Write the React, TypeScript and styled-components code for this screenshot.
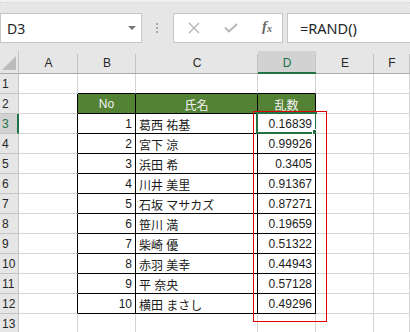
import styled, { createGlobalStyle } from "styled-components";

const GlobalStyle = createGlobalStyle`
  html, body {
    margin: 0;
    padding: 0;
    background: #e6e6e6;
  }
`;

const UI_FONT = `"Noto Sans", "Liberation Sans", sans-serif`;
const CELL_FONT = `"Liberation Sans", "Noto Sans CJK JP", sans-serif`;
const EXCEL_GREEN = "#217346";
const GRID = "#d4d4d4";

const COLS = ["A", "B", "C", "D", "E", "F"];
const COL_WIDTHS = "19px 59px 58px 122px 58px 58px 1fr";

interface Person {
  no: number;
  name: string;
  rand: string;
}

const people: Person[] = [
  { no: 1, name: "葛西 祐基", rand: "0.16839" },
  { no: 2, name: "宮下 涼", rand: "0.99926" },
  { no: 3, name: "浜田 希", rand: "0.3405" },
  { no: 4, name: "川井 美里", rand: "0.91367" },
  { no: 5, name: "石坂 マサカズ", rand: "0.87271" },
  { no: 6, name: "笹川 満", rand: "0.19659" },
  { no: 7, name: "柴崎 優", rand: "0.51322" },
  { no: 8, name: "赤羽 美幸", rand: "0.44943" },
  { no: 9, name: "平 奈央", rand: "0.57128" },
  { no: 10, name: "横田 まさし", rand: "0.49296" },
];

export default function App() {
  // 表の範囲は B2:D12 (列 1..3, 行 2..12)
  const inTable = (col: number, row: number) => col >= 1 && col <= 3 && row >= 2 && row <= 12;

  const cellText = (col: number, row: number) => {
    if (row === 2) return ["No", "氏名", "乱数"][col - 1];
    const p = people[row - 3];
    if (!p) return "";
    if (col === 1) return String(p.no);
    if (col === 2) return p.name;
    return p.rand;
  };

  const rows = Array.from({ length: 13 }, (_, i) => i + 1);

  return (
    <Page>
      <GlobalStyle />
      <TopStrip />
      <FormulaBar>
        <NameBox>
          <span>D3</span>
          <DropArrow />
        </NameBox>
        <Splitter>
          <Dot />
          <Dot />
          <Dot />
        </Splitter>
        <FxBox>
          <svg width="12" height="12" viewBox="0 0 12 12">
            <path d="M1 1 L11 11 M11 1 L1 11" stroke="#b4b4b4" strokeWidth="1.4" fill="none" />
          </svg>
          <svg width="14" height="10" viewBox="0 0 14 10">
            <path d="M1 4.5 L5 8.5 L13 1" stroke="#b4b4b4" strokeWidth="1.8" fill="none" />
          </svg>
          <FxLabel>
            f<sub>x</sub>
          </FxLabel>
        </FxBox>
        <FormulaInput>=RAND()</FormulaInput>
      </FormulaBar>

      <Sheet>
        <Corner>
          <svg width="14" height="14" viewBox="0 0 14 14">
            <polygon points="0,14 14,0 14,14" fill="#bcbcbc" />
          </svg>
        </Corner>
        {COLS.map((c) => (
          <ColHeader key={c} active={c === "D"}>
            {c}
          </ColHeader>
        ))}

        {rows.map((row) => (
          <Row key={row}>
            <RowHeader active={row === 3}>{row}</RowHeader>
            {COLS.map((c, i) => {
              const col = i;
              const table = inTable(col, row);
              const head = row === 2 && table;
              const rightBlack = table || (col === 0 && row >= 2 && row <= 12);
              const bottomBlack = col >= 1 && col <= 3 && row >= 1 && row <= 12;
              return (
                <Cell
                  key={c}
                  head={head}
                  align={head ? "center" : col === 2 ? "left" : "right"}
                  rightColor={rightBlack ? "#000" : GRID}
                  bottomColor={bottomBlack ? "#000" : GRID}
                >
                  {table ? cellText(col, row) : ""}
                  {col === 3 && row === 3 && (
                    <Selection>
                      <FillHandle />
                    </Selection>
                  )}
                  {col === 3 && row === 3 && <RedFrame />}
                </Cell>
              );
            })}
          </Row>
        ))}
      </Sheet>
    </Page>
  );
}

const Page = styled.div`
  width: 410px;
  height: 332px;
  overflow: hidden;
  background: #e6e6e6;
  display: flex;
  flex-direction: column;
  font-family: ${UI_FONT};
`;

const TopStrip = styled.div`
  height: 2px;
  flex-shrink: 0;
  background: #f1f1f1;
  border-bottom: 1px dotted #cfcfcf;
`;

const FormulaBar = styled.div`
  height: 48px;
  flex-shrink: 0;
  padding-top: 10px;
  box-sizing: border-box;
  display: flex;
  align-items: flex-start;
`;

const Box = styled.div`
  height: 30px;
  box-sizing: border-box;
  background: #fff;
  border: 1px solid #c6c6c6;
  display: flex;
  align-items: center;
`;

const NameBox = styled(Box)`
  width: 142px;
  padding: 0 5px 0 6px;
  justify-content: space-between;
  font-size: 14px;
  color: #262626;
`;

const DropArrow = styled.div`
  width: 0;
  height: 0;
  border-left: 4px solid transparent;
  border-right: 4px solid transparent;
  border-top: 4px solid #777;
  margin-top: -1px;
`;

const Splitter = styled.div`
  width: 31px;
  height: 30px;
  display: flex;
  flex-direction: column;
  align-items: center;
  justify-content: center;
  gap: 2px;
  padding-right: 1px;
  box-sizing: border-box;
`;

const Dot = styled.div`
  width: 2px;
  height: 2px;
  background: #a6a6a6;
`;

const FxBox = styled(Box)`
  width: 110px;
  padding: 0 10px 0 14px;
  justify-content: space-between;
`;

const FxLabel = styled.span`
  font-family: "Liberation Serif", serif;
  font-style: italic;
  font-weight: bold;
  font-size: 15px;
  color: #6a6a6a;
  margin-top: -3px;

  sub {
    font-size: 10px;
    vertical-align: -1px;
  }
`;

const FormulaInput = styled(Box)`
  flex: 1;
  margin-left: 4px;
  border-right: none;
  padding-left: 12px;
  font-size: 14.5px;
  color: #262626;
`;

const Sheet = styled.div`
  display: grid;
  grid-template-columns: ${COL_WIDTHS};
  grid-template-rows: 23px;
  grid-auto-rows: 20px;
`;

const Row = styled.div`
  display: contents;
`;

const HeaderBase = styled.div`
  position: relative;
  box-sizing: border-box;
  display: flex;
  align-items: center;
  font-family: ${CELL_FONT};
  font-size: 12px;
`;

const Corner = styled(HeaderBase)`
  justify-content: flex-end;
  align-items: flex-end;
  padding: 0 2px 3px 0;
  border-right: 1px solid #c4c4c4;
  border-bottom: 1px solid #ababab;
`;

const ColHeader = styled(HeaderBase)<{ active: boolean }>`
  justify-content: center;
  padding-top: 2px;
  background: ${({ active }) => (active ? "#d2d2d2" : "#e6e6e6")};
  color: ${({ active }) => (active ? EXCEL_GREEN : "#262626")};
  border-bottom: ${({ active }) => (active ? `2px solid ${EXCEL_GREEN}` : "1px solid #ababab")};

  &::after {
    content: "";
    position: absolute;
    right: 0;
    top: 3px;
    bottom: 0;
    width: 1px;
    background: #c4c4c4;
  }
`;

const RowHeader = styled(HeaderBase)<{ active: boolean }>`
  padding-left: 2px;
  background: ${({ active }) => (active ? "#d2d2d2" : "#e6e6e6")};
  color: ${({ active }) => (active ? EXCEL_GREEN : "#262626")};
  border-right: ${({ active }) => (active ? `2px solid ${EXCEL_GREEN}` : "1px solid #c4c4c4")};
  border-bottom: 1px solid #c4c4c4;
  overflow: hidden;
`;

const Cell = styled.div<{
  head: boolean;
  align: "left" | "right" | "center";
  rightColor: string;
  bottomColor: string;
}>`
  position: relative;
  box-sizing: border-box;
  display: flex;
  align-items: center;
  justify-content: ${({ align }) =>
    align === "left" ? "flex-start" : align === "center" ? "center" : "flex-end"};
  padding: 1px 3px 0;
  white-space: nowrap;
  font-family: ${CELL_FONT};
  font-size: 12px;
  color: ${({ head }) => (head ? "#f2f2f2" : "#1a1a1a")};
  background: ${({ head }) => (head ? "#548235" : "#fff")};
  border-right: 1px solid ${({ rightColor }) => rightColor};
  border-bottom: 1px solid ${({ bottomColor }) => bottomColor};
`;

const Selection = styled.div`
  position: absolute;
  left: -2px;
  top: -2px;
  right: -2px;
  bottom: -1px;
  border: 2px solid ${EXCEL_GREEN};
  pointer-events: none;
`;

const FillHandle = styled.div`
  position: absolute;
  right: -4px;
  bottom: -4px;
  width: 5px;
  height: 5px;
  background: ${EXCEL_GREEN};
  border: 1px solid #fff;
`;

const RedFrame = styled.div`
  position: absolute;
  left: -5px;
  top: -3px;
  width: 74px;
  height: 211px;
  box-sizing: border-box;
  border: 1px solid #e00000;
  pointer-events: none;
  z-index: 2;
`;
